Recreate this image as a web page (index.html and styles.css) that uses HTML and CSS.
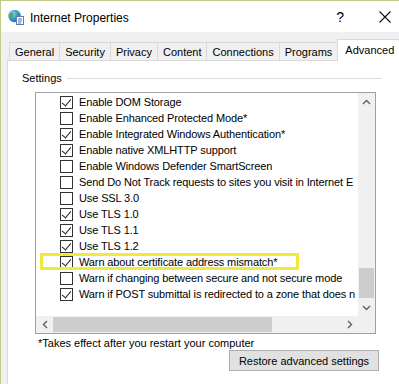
FILE: index.html
```html
<!DOCTYPE html>
<html lang="en">
<head>
<meta charset="utf-8">
<title>Internet Properties</title>
<link rel="stylesheet" href="styles.css">
</head>
<body>
<div class="window">
  <div class="titlebar">
    <svg class="app-icon" width="16" height="16" viewBox="0 0 16 16">
      <defs>
        <radialGradient id="g" cx="0.35" cy="0.3" r="0.8">
          <stop offset="0" stop-color="#8fd3f5"/>
          <stop offset="0.6" stop-color="#2f8fcf"/>
          <stop offset="1" stop-color="#1c5e9c"/>
        </radialGradient>
      </defs>
      <circle cx="6.5" cy="7" r="6.2" fill="url(#g)"/>
      <path d="M2.2 4.5 C3.5 3 5 3.2 5.5 4.3 C6 5.5 4.5 6 4.8 7.4 C5 8.6 3.6 9.3 2.8 8.8 C1.6 7.8 1.4 5.8 2.2 4.5 Z" fill="#58a94c"/>
      <path d="M7.5 2.2 C9.2 2.3 10.6 3.4 11.4 4.8 C10.2 5.2 9.2 4.6 8.6 3.8 C8 3.2 7.4 3 7.5 2.2 Z" fill="#58a94c"/>
      <rect x="8.5" y="7.5" width="7" height="8" fill="#ffffff" stroke="#5b7fa8" stroke-width="1"/>
      <line x1="10" y1="10" x2="14" y2="10" stroke="#3b73b9" stroke-width="1"/>
      <line x1="10" y1="12" x2="14" y2="12" stroke="#3b73b9" stroke-width="1"/>
      <line x1="10" y1="14" x2="13" y2="14" stroke="#3b73b9" stroke-width="1"/>
    </svg>
    <span class="title">Internet Properties</span>
    <span class="help">?</span>
    <svg class="close" width="12" height="12" viewBox="0 0 12 12">
      <path d="M0.5 0.5 L11.5 11.5 M11.5 0.5 L0.5 11.5" stroke="#111" stroke-width="1.1" fill="none"/>
    </svg>
  </div>
  <div class="dialog">
    <div class="tabs">
      <div class="tab">General</div>
      <div class="tab">Security</div>
      <div class="tab">Privacy</div>
      <div class="tab">Content</div>
      <div class="tab">Connections</div>
      <div class="tab">Programs</div>
      <div class="tab active">Advanced</div>
    </div>
    <div class="panel">
      <div class="group-head">
        <span class="group-label">Settings</span>
        <div class="group-rule"></div>
      </div>
      <div class="listbox">
        <div class="list-main">
          <div class="rows">
            <div class="row"><span class="cb on"></span><span>Enable DOM Storage</span></div>
            <div class="row"><span class="cb"></span><span>Enable Enhanced Protected Mode*</span></div>
            <div class="row"><span class="cb on"></span><span>Enable Integrated Windows Authentication*</span></div>
            <div class="row"><span class="cb on"></span><span>Enable native XMLHTTP support</span></div>
            <div class="row"><span class="cb"></span><span>Enable Windows Defender SmartScreen</span></div>
            <div class="row"><span class="cb"></span><span>Send Do Not Track requests to sites you visit in Internet E</span></div>
            <div class="row"><span class="cb"></span><span>Use SSL 3.0</span></div>
            <div class="row"><span class="cb on"></span><span>Use TLS 1.0</span></div>
            <div class="row"><span class="cb on"></span><span>Use TLS 1.1</span></div>
            <div class="row"><span class="cb on"></span><span>Use TLS 1.2</span></div>
            <div class="row"><span class="cb on"></span><span>Warn about certificate address mismatch*</span></div>
            <div class="row"><span class="cb"></span><span>Warn if changing between secure and not secure mode</span></div>
            <div class="row"><span class="cb on"></span><span>Warn if POST submittal is redirected to a zone that does n</span></div>
          </div>
          <div class="vscroll">
            <div class="sbtn">
              <svg width="9" height="6" viewBox="0 0 9 6"><path d="M1 5 L4.5 1.5 L8 5" stroke="#606060" stroke-width="1.4" fill="none"/></svg>
            </div>
            <div class="vtrack"><div class="vthumb"></div></div>
            <div class="sbtn">
              <svg width="9" height="6" viewBox="0 0 9 6"><path d="M1 1 L4.5 4.5 L8 1" stroke="#606060" stroke-width="1.4" fill="none"/></svg>
            </div>
          </div>
        </div>
        <div class="hscroll">
          <div class="sbtn">
            <svg width="6" height="9" viewBox="0 0 6 9"><path d="M5 1 L1.5 4.5 L5 8" stroke="#606060" stroke-width="1.4" fill="none"/></svg>
          </div>
          <div class="htrack"><div class="hthumb"></div></div>
          <div class="sbtn">
            <svg width="6" height="9" viewBox="0 0 6 9"><path d="M1 1 L4.5 4.5 L1 8" stroke="#606060" stroke-width="1.4" fill="none"/></svg>
          </div>
          <div class="corner"></div>
        </div>
        <div class="highlight"></div>
      </div>
      <div class="note">*Takes effect after you restart your computer</div>
      <div class="btn-row"><button class="btn" type="button">Restore advanced settings</button></div>
    </div>
  </div>
</div>
</body>
</html>
```

FILE: styles.css
```css
* { box-sizing: border-box; }
html, body { margin: 0; padding: 0; }
body {
  width: 399px;
  height: 384px;
  overflow: hidden;
  background: #f0f0f0;
  font-family: "Liberation Sans", Arial, sans-serif;
  font-size: 11px;
  color: #000;
}
.window {
  height: 384px;
  border-top: 1px solid #c3cc86;
  border-left: 1px solid #c3cc86;
  background: #f0f0f0;
  overflow: hidden;
}
.titlebar {
  height: 31px;
  background: #fff;
  display: flex;
  align-items: center;
}
.app-icon { margin-left: 7px; flex: none; }
.title { margin-left: 6px; font-size: 12px; margin-top: 2px; }
.help { margin-left: auto; font-size: 14px; margin-right: 35px; margin-top: 1px; }
.close { margin-right: 8px; flex: none; margin-top: 1px; }

.dialog { padding-left: 6px; }
.tabs {
  display: flex;
  align-items: flex-end;
  height: 21px;
  margin-top: 7px;
  padding-left: 2px;
}
.tab {
  height: 18px;
  padding: 0 5px 0 5px;
  border: 1px solid #d9d9d9;
  border-bottom: none;
  margin-left: -1px;
  display: flex;
  align-items: center;
  background: #f0f0f0;
  white-space: nowrap;
}
.tab:first-child { margin-left: 0; }
.tab.active {
  height: 22px;
  margin-bottom: -1px;
  padding: 0 6px 2px 7px;
  background: #fff;
  position: relative;
  z-index: 1;
}
.panel {
  width: 400px;
  height: 330px;
  background: #fff;
  border: 1px solid #d9d9d9;
}
.group-head {
  display: flex;
  align-items: center;
  height: 14px;
  margin: 10px 0 0 14px;
  width: 360px;
}
.group-label { line-height: 14px; }
.group-rule {
  flex: 1;
  height: 1px;
  background: #dcdcdc;
  margin-left: 5px;
}
.listbox {
  position: relative;
  margin: 7px 0 0 27px;
  width: 341px;
  height: 242px;
  border: 1px solid #a0a0a0;
  display: flex;
  flex-direction: column;
}
.list-main { display: flex; height: 223px; }
.rows {
  width: 322px;
  overflow: hidden;
  padding-top: 1px;
}
.row {
  height: 16px;
  display: flex;
  align-items: center;
  padding-left: 24px;
  white-space: nowrap;
  letter-spacing: -0.12px;
}
.row span:last-child { margin-left: 6px; }
.cb {
  flex: none;
  width: 13px;
  height: 13px;
  border: 1px solid #333;
  background: #fff;
  position: relative;
}
.cb.on::after {
  content: "";
  position: absolute;
  left: 3px;
  top: 0px;
  width: 4px;
  height: 8px;
  border-right: 1.2px solid #222;
  border-bottom: 1.2px solid #222;
  transform: rotate(40deg);
}
.vscroll {
  width: 17px;
  background: #f0f0f0;
  display: flex;
  flex-direction: column;
}
.sbtn {
  flex: none;
  width: 17px;
  height: 17px;
  display: flex;
  align-items: center;
  justify-content: center;
}
.vtrack { flex: 1; display: flex; flex-direction: column; justify-content: flex-end; padding-bottom: 1px; }
.vthumb { width: 15px; height: 30px; margin-left: 1px; background: #cdcdcd; }
.hscroll { display: flex; height: 17px; background: #f0f0f0; }
.htrack { flex: 1; display: flex; align-items: center; }
.hthumb { width: 219px; height: 15px; background: #cdcdcd; }
.corner { width: 17px; height: 17px; background: #f0f0f0; }
.highlight {
  position: absolute;
  left: 4px;
  top: 160px;
  width: 259px;
  height: 17px;
  border: 3px solid #f2ea3a;
}
.note { margin: 2px 0 0 30px; line-height: 14px; }
.btn-row { padding-left: 221px; }
.btn {
  width: 150px;
  height: 21px;
  background: #e1e1e1;
  border: 1px solid #adadad;
  font-family: "Liberation Sans", Arial, sans-serif;
  font-size: 11px;
  color: #000;
  padding: 0;
}
```
